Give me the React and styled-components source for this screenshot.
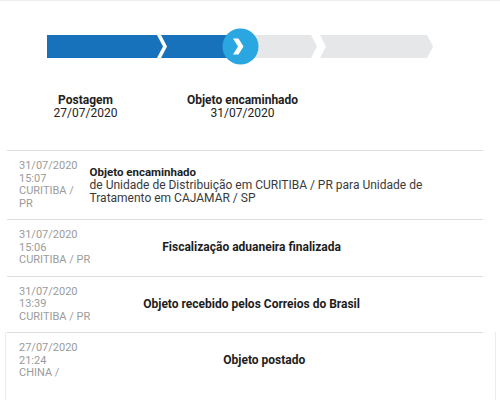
import styled, {createGlobalStyle} from 'styled-components';

const events = [
  {
    date: '31/07/2020',
    time: '15:07',
    place: 'CURITIBA / PR',
    title: 'Objeto encaminhado',
    detail:
      'de Unidade de Distribuição em CURITIBA / PR para Unidade de Tratamento em CAJAMAR / SP'
  },
  {
    date: '31/07/2020',
    time: '15:06',
    place: 'CURITIBA / PR',
    title: 'Fiscalização aduaneira finalizada'
  },
  {
    date: '31/07/2020',
    time: '13:39',
    place: 'CURITIBA / PR',
    title: 'Objeto recebido pelos Correios do Brasil'
  }
];

const lastEvent = {
  date: '27/07/2020',
  time: '21:24',
  place: 'CHINA /',
  title: 'Objeto postado'
};

function Stepper() {
  return (
    <Track width="500" height="70" viewBox="0 0 500 70">
      <polygon points="47,34 157,34 163,45.5 157,57 47,57" fill="#1872bb" />
      <polygon points="161,34 241,34 241,57 161,57 167,45.5" fill="#1872bb" />
      <polygon points="241,34 311,34 317,45.5 311,57 241,57" fill="#e6e7e9" />
      <polygon points="320,34 427,34 433,45.5 427,57 320,57 326,45.5" fill="#e6e7e9" />
      <circle cx="240.5" cy="45.5" r="18" fill="#2aa6e0" />
      <polygon points="233,37.5 238.5,37.5 243.5,45.5 238.5,53.5 233,53.5 238,45.5" fill="#fff" />
    </Track>
  );
}

function EventRow({event}) {
  const centered = !event.detail;
  return (
    <Row>
      <When>
        {event.date}
        <br />
        {event.time}
        <br />
        {event.place}
      </When>
      <Info $centered={centered}>
        <Title $centered={centered}>{event.title}</Title>
        {event.detail && <Detail>{event.detail}</Detail>}
      </Info>
    </Row>
  );
}

export default function App() {
  return (
    <Page>
      <GlobalStyle />
      <Stepper />
      <Labels>
        <StepLabel>
          <strong>Postagem</strong>
          <span>27/07/2020</span>
        </StepLabel>
        <StepLabel>
          <strong>Objeto encaminhado</strong>
          <span>31/07/2020</span>
        </StepLabel>
      </Labels>
      <List>
        {events.map((event, i) => (
          <EventRow key={i} event={event} />
        ))}
        <Card>
          <EventRow event={lastEvent} />
        </Card>
      </List>
    </Page>
  );
}

const GlobalStyle = createGlobalStyle`
  body {
    margin: 0;
    background: #fff;
    font-family: Roboto, "Liberation Sans", sans-serif;
  }
`;

const Page = styled.div`
  width: 500px;
  height: 400px;
  overflow: hidden;
  border-top: 1px solid #eeeeee;
  box-sizing: border-box;
`;

const Track = styled.svg`
  display: block;
`;

const Labels = styled.div`
  display: grid;
  grid-template-columns: repeat(3, 157px);
  padding-left: 7px;
  margin-top: 23px;
`;

const StepLabel = styled.div`
  display: flex;
  flex-direction: column;
  align-items: center;
  font-size: 12px;
  line-height: 13px;
  color: #222;

  strong {
    font-weight: 700;
  }
`;

const List = styled.div`
  margin-top: 30px;
  padding: 0 4px 0 5px;
`;

const Row = styled.div`
  display: flex;
  align-items: center;
  gap: 12px;
  margin: 0 13px 0 2px;
  padding: 9px 12px;
  border-top: 1px solid #dddddd;
`;

const When = styled.div`
  flex: 0 1 auto;
  font-size: 11px;
  line-height: 12.5px;
  color: #9b9b9b;
`;

const Info = styled.div`
  flex: 1 1 auto;
  font-size: 12px;
  line-height: 13px;
  color: #333;
  text-align: ${p => (p.$centered ? 'center' : 'left')};
  padding-right: ${p => (p.$centered ? '70px' : '0')};
`;

const Title = styled.div`
  font-weight: 700;
  font-size: ${p => (p.$centered ? '12px' : '11.5px')};
  color: #1d1d1d;
`;

const Detail = styled.div`
  color: #3a3a3a;
`;

const Card = styled.div`
  border-left: 1px solid #ececec;
  border-right: 1px solid #ececec;
  height: 80px;

  ${Row} {
    margin: 0 12px 0 1px;
  }

  ${Info} {
    padding-right: 32px;
  }
`;
